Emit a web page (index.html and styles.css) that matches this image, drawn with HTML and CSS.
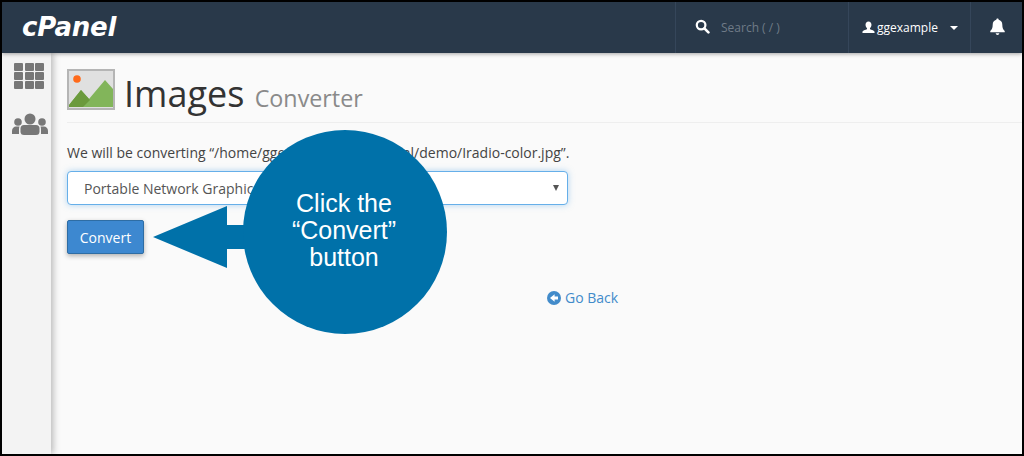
FILE: index.html
```html
<!DOCTYPE html>
<html lang="en">
<head>
<meta charset="utf-8">
<title>cPanel Images Converter</title>
<link rel="stylesheet" href="styles.css">
</head>
<body>
<div class="frame">
  <header class="topbar">
    <div class="logo">
      <span class="logo-text">cPanel</span>
    </div>
    <div class="top-search">
      <svg class="search-icon" viewBox="0 0 16 16"><circle cx="6.5" cy="6.5" r="4.6" fill="none" stroke="#fff" stroke-width="2.4"/><path d="M10 10l4.3 4.3" stroke="#fff" stroke-width="2.8" stroke-linecap="round"/></svg>
      <span class="search-text">Search ( / )</span>
    </div>
    <div class="top-user">
      <svg class="user-icon" viewBox="0 0 14 14"><path d="M7 0.5c2 0 3.2 1.5 3.2 3.5 0 1.5-.7 3-1.6 3.7v1c0 .6 4.4 1.3 4.9 3v1.3H.5V11.700c.5-1.700 4.900-2.400 4.900-3v-1C4.500 7 3.800 5.500 3.800 4c0-2 1.200-3.500 3.200-3.500z" fill="#fff"/></svg>
      <span class="user-name">ggexample</span>
      <span class="caret"></span>
    </div>
    <div class="top-bell">
      <svg class="bell-icon" viewBox="0 0 16 16"><path d="M8 0.500c.7 0 1.100.5 1.100 1.100 2.200.5 3.400 2.200 3.400 4.600 0 3.500 1 4.900 2.300 6.100v1H1.200v-1c1.300-1.200 2.300-2.600 2.300-6.100 0-2.400 1.200-4.100 3.400-4.600C6.900 1 7.300.5 8 .5zM6.300 14.400h3.400C9.600 15.300 8.900 16 8 16s-1.600-.7-1.700-1.600z" fill="#fff"/></svg>
    </div>
  </header>
  <div class="body">
    <nav class="sidebar">
      <div class="grid-icon">
        <i></i><i></i><i></i><i></i><i></i><i></i><i></i><i></i><i></i>
      </div>
      <svg class="users-icon" viewBox="0 0 36 22"><g fill="#777"><circle cx="18" cy="6" r="5.500"/><rect x="8.500" y="12" width="19" height="10" rx="3.500"/><circle cx="6" cy="9" r="3.800"/><path d="M0 21v-3c0-3 2-4.500 4-4.500h3.500C7 15 7 16 7 18v3z"/><circle cx="30" cy="9" r="3.800"/><path d="M36 21v-3c0-3-2-4.500-4-4.500h-3.500c.5 1.500.5 2.500.5 4.500v3z"/></g></svg>
    </nav>
    <main class="main">
      <div class="page-head">
        <svg class="page-icon" viewBox="0 0 48 41">
          <rect x="1" y="1" width="46" height="39" fill="#e0e0e0" stroke="#b5b5b5" stroke-width="2"/>
          <circle cx="10" cy="10" r="3.800" fill="#ff6a1a"/>
          <path d="M2 38V36L14 21l8 9L38 11l8 9v18z" fill="#82b55a"/>
          <path d="M2 38v-2L14 21l9 10-7 7z" fill="#6b9a3c"/>
        </svg>
        <h1 class="page-title">Images <small>Converter</small></h1>
      </div>
      <p class="intro">We will be converting “/home/ggexample/public_html/demo/Iradio-color.jpg”.</p>
      <div class="select">
        <span>Portable Network Graphics (.png)</span>
        <b class="select-arrow"></b>
      </div>
      <button class="btn" type="button">Convert</button>
      <a class="back" href="#">
        <svg class="back-icon" viewBox="0 0 14 14"><circle cx="7" cy="7" r="7" fill="#428bca"/><path d="M7.600 3.200v2.400h3.400v2.800H7.600v2.400L3 7z" fill="#fff"/></svg>
        <span>Go Back</span>
      </a>
    </main>
  </div>
  <div class="callout">
    <svg class="callout-arrow" viewBox="0 0 100 62"><path d="M0 31L74 0v19h26v24H74v19z" fill="#0071a9"/></svg>
    <div class="callout-circle">Click the<br>“Convert”<br>button</div>
  </div>
</div>
</body>
</html>
```
FILE: styles.css
```css
* { box-sizing: border-box; }
html, body { margin: 0; height: 100%; background: #000; overflow: hidden; }
.frame {
  position: relative;
  width: 1024px;
  height: 456px;
  border: 2px solid #000;
  display: flex;
  flex-direction: column;
  font-family: "Open Sans", sans-serif;
  color: #333;
  background: #fafafa;
  overflow: hidden;
}
.topbar {
  flex: 0 0 51px;
  display: flex;
  align-items: stretch;
  background: #29394a;
  position: relative;
  z-index: 2;
  box-shadow: 0 1px 4px rgba(0,0,0,.35);
}
.logo { flex: 0 0 673px; padding: 7px 0 0 20px; }
.logo-text {
  font-family: "DejaVu Sans", sans-serif;
  font-weight: 700;
  font-style: italic;
  font-size: 26px;
  letter-spacing: -0.2px;
  line-height: 36px;
  color: #fff;
}
.top-search {
  flex: 0 0 174px;
  display: flex;
  align-items: center;
  padding-left: 19px;
  border-left: 1px solid #35465a;
  border-right: 1px solid #35465a;
}
.search-icon { width: 15px; height: 15px; margin-right: 11px; margin-top: -2px; }
.search-text { font-size: 12px; color: #6f7b87; margin-top: -1px; }
.top-user {
  flex: 0 0 122px;
  display: flex;
  align-items: center;
  padding-left: 13px;
  border-right: 1px solid #35465a;
  color: #fff;
  font-size: 12px;
}
.user-icon { width: 13px; height: 13px; margin-right: 2px; margin-top: -1px; }
.user-name { margin-top: -1px; }
.caret {
  width: 0; height: 0;
  margin-left: 12px;
  border-left: 4px solid transparent;
  border-right: 4px solid transparent;
  border-top: 4px solid #fff;
}
.top-bell { flex: 1; display: flex; align-items: center; padding-left: 18px; }
.bell-icon { width: 17px; height: 17px; margin-top: -3px; }
.body { flex: 1; display: flex; min-height: 0; }
.sidebar {
  flex: 0 0 49px;
  background: #f3f3f3;
  box-shadow: 2px 0 7px rgba(0,0,0,.28);
  display: flex;
  flex-direction: column;
  align-items: center;
  padding-top: 10px;
}
.grid-icon {
  display: grid;
  grid-template-columns: repeat(3, 9px);
  grid-auto-rows: 7.500px;
  gap: 1.500px;
  margin-left: 5px;
}
.grid-icon i { background: #777; border-radius: 1px; }
.users-icon { width: 36px; height: 22px; margin-top: 24px; margin-left: 6px; }
.main { flex: 1; padding: 16px 0 0 16px; min-width: 0; }
.page-head {
  display: flex;
  align-items: flex-start;
  gap: 9px;
  height: 54px;
  border-bottom: 1px solid #eee;
}
.page-icon { width: 48px; height: 41px; flex: none; }
.page-title {
  margin: 0;
  font-size: 36px;
  font-weight: 400;
  line-height: 49px;
  color: #333;
}
.page-title small { font-size: 23.300px; color: #8a8a8a; margin-left: 1px; }
.intro { margin: 20px 0 0; font-size: 14px; line-height: 20px; color: #444; }
.select {
  width: 501px;
  height: 34px;
  margin-top: 8px;
  background: #fff;
  border: 1px solid #66afe9;
  border-radius: 4px;
  box-shadow: 0 0 6px rgba(102,175,233,.5);
  display: flex;
  align-items: center;
  justify-content: space-between;
  padding: 0 8px 0 16px;
  font-size: 14px;
  color: #555;
}
.select-arrow {
  width: 0; height: 0;
  border-left: 3px solid transparent;
  border-right: 3px solid transparent;
  border-top: 6px solid #555;
}
.btn {
  display: block;
  width: 77px;
  height: 34px;
  margin-top: 15px;
  padding: 0;
  background: #3d88d0;
  border: 1px solid #2e6da4;
  border-radius: 2px;
  box-shadow: 0 2px 5px rgba(0,0,0,.3);
  color: #fff;
  font: 14px "Open Sans", sans-serif;
}
.back {
  display: flex;
  align-items: center;
  gap: 4px;
  margin: 34px 0 0 480px;
  font-size: 14px;
  line-height: 20px;
  color: #428bca;
  text-decoration: none;
}
.back-icon { width: 14px; height: 14px; }
.callout {
  position: absolute;
  left: 151px;
  top: 128px;
  width: 294px;
  height: 204px;
}
.callout-arrow {
  position: absolute;
  left: 0;
  top: 76px;
  width: 100px;
  height: 62px;
}
.callout-circle {
  position: absolute;
  left: 90px;
  top: 0;
  width: 204px;
  height: 204px;
  border-radius: 50%;
  background: #0071a9;
  color: #fff;
  font-family: "Liberation Sans", sans-serif;
  font-size: 25px;
  line-height: 27px;
  text-align: center;
  padding: 60px 2px 0 0;
}
```
